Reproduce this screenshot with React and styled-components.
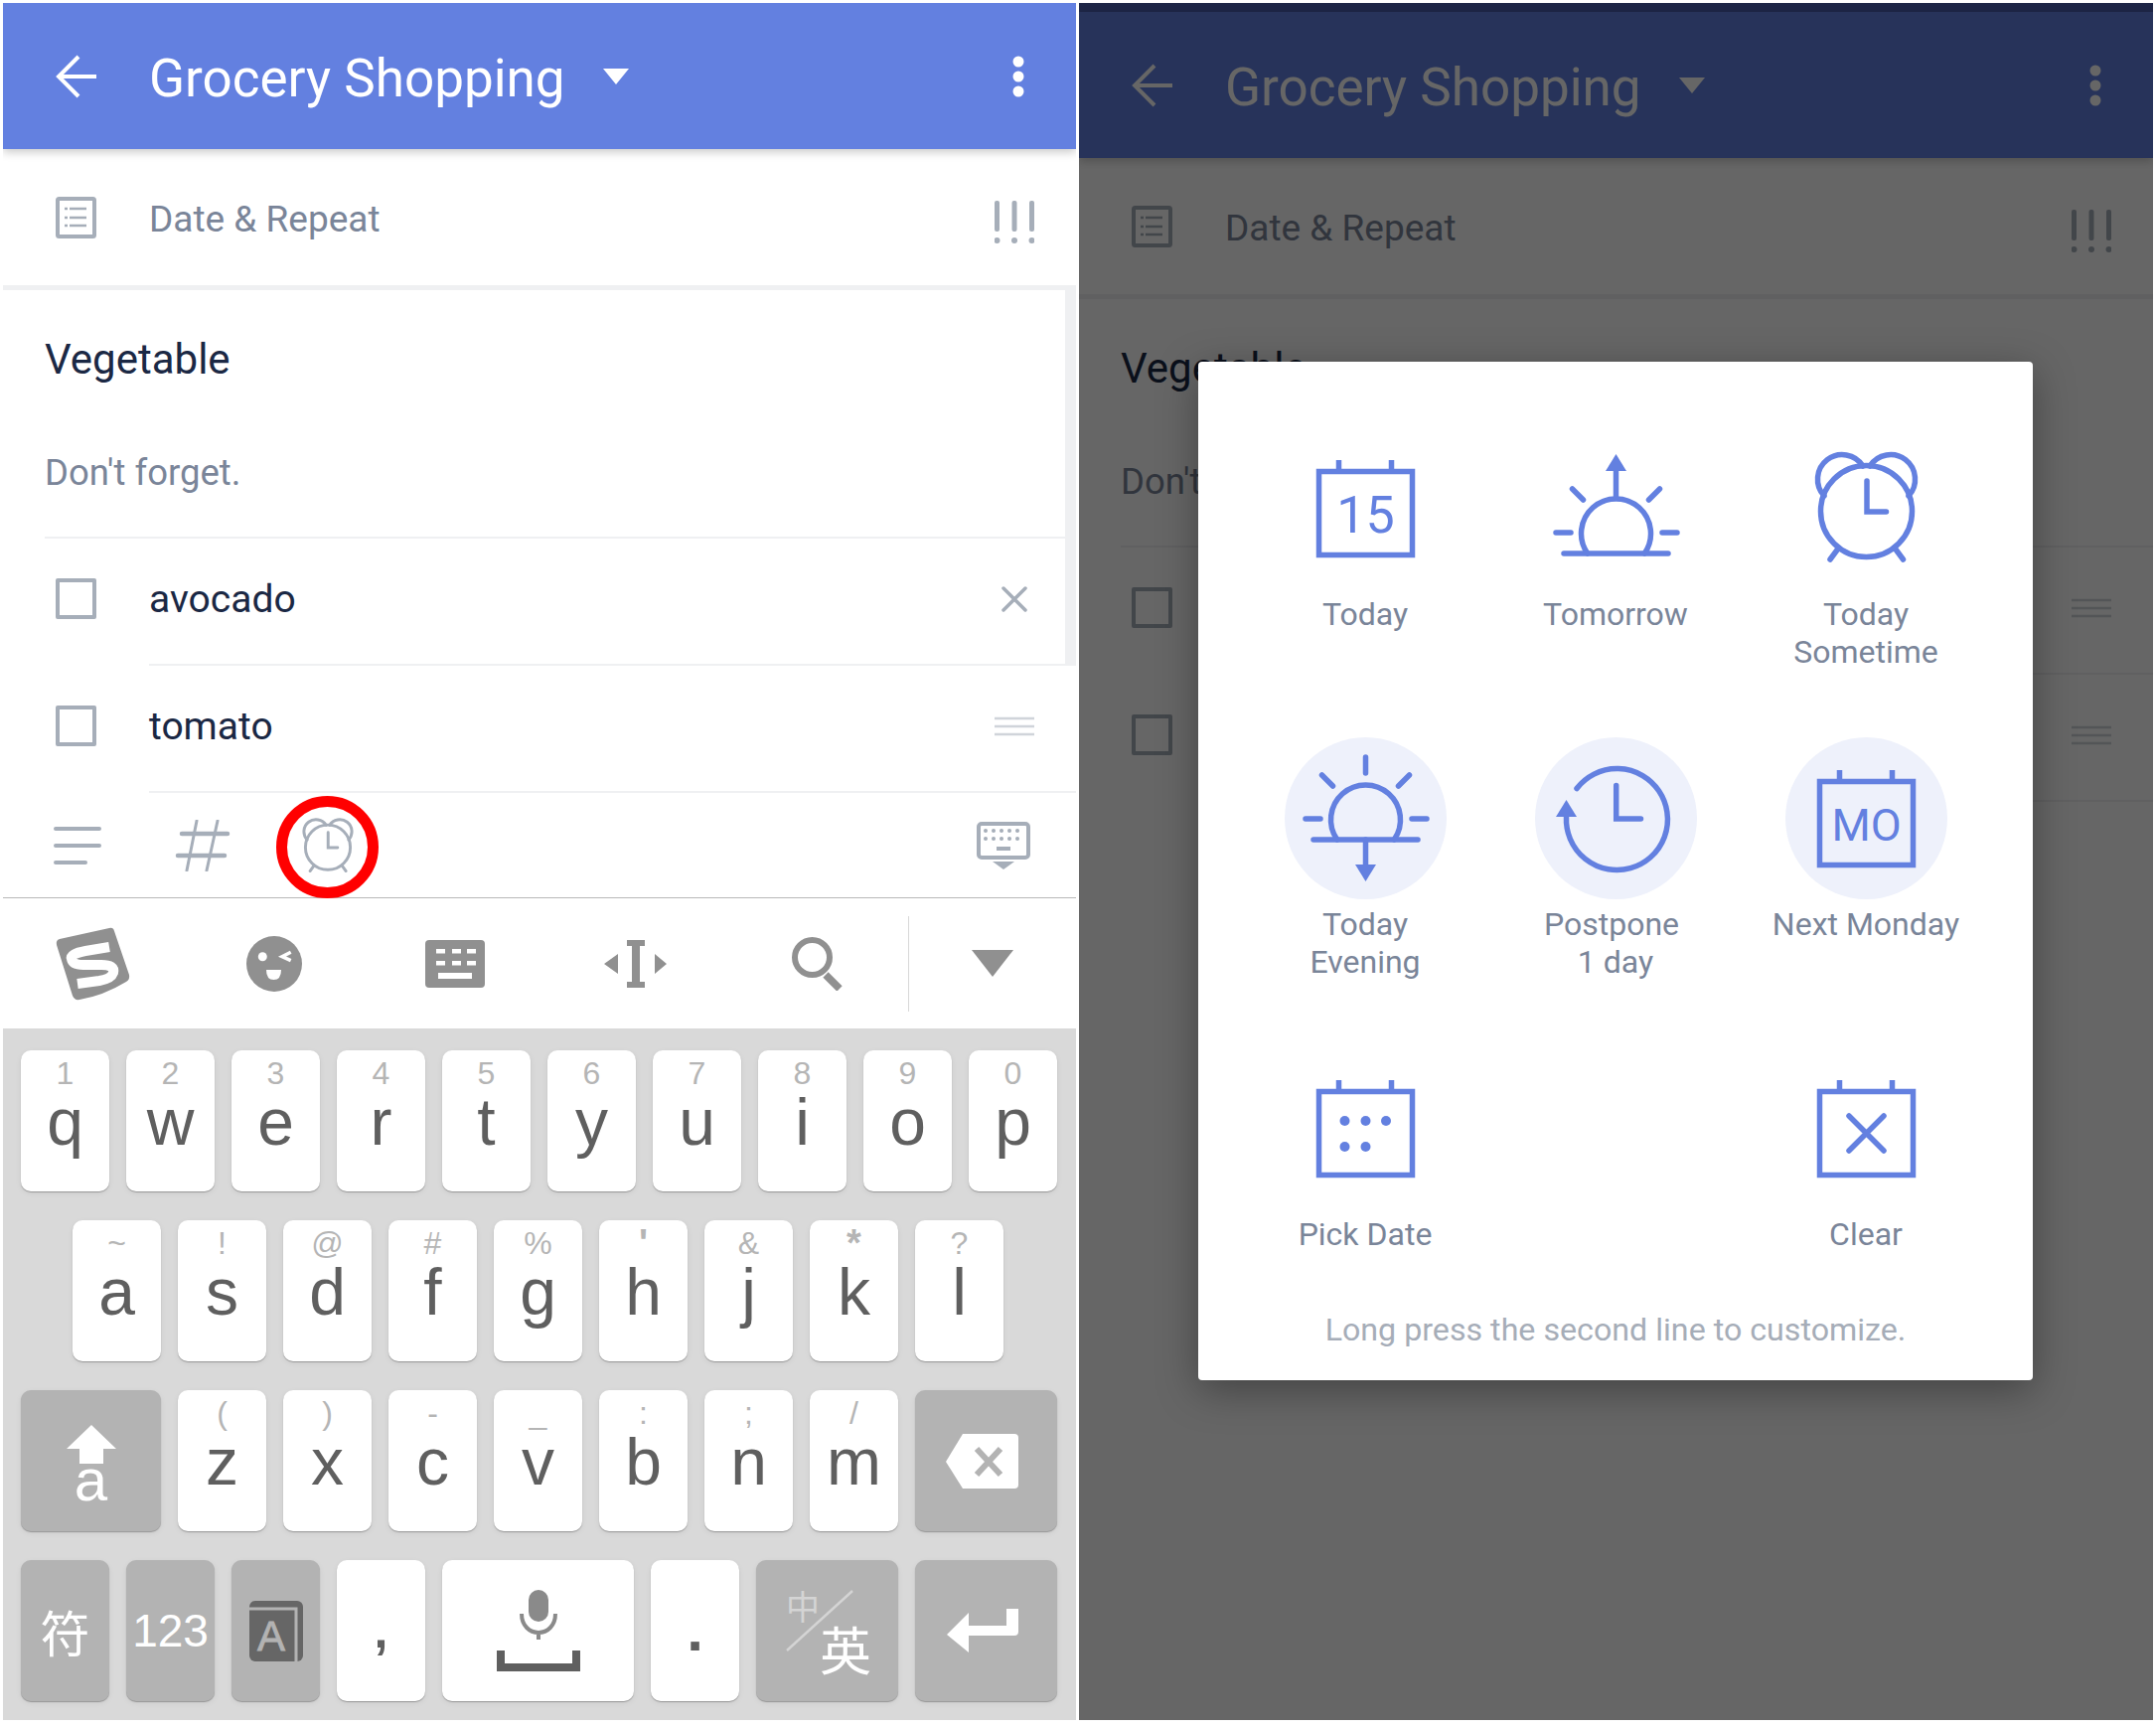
import React from "react";
import styled, { createGlobalStyle } from "styled-components";

const BLUE = "#6380e0";
const GREY = "#a6aeb9";
const KEYGREY = "#909090";

const Global = createGlobalStyle`
  html, body { margin: 0; padding: 0; background: #fff; }
  body { font-family: Roboto, "Noto Sans", sans-serif; }
`;

const Page = styled.div`
  display: grid;
  grid-template-columns: 1080px 1081px;
  column-gap: 3px;
  padding: 3px 3px 0;
  width: 2170px;
  height: 1740px;
  box-sizing: border-box;
`;

const Phone = styled.div`
  position: relative;
  height: 1728px;
  overflow: hidden;
  background: #fff;
  display: flex;
  flex-direction: column;
`;

const StatusStrip = styled.div`
  height: 9px;
  background: #4b5fb1;
  flex: none;
`;

const Header = styled.header`
  position: relative;
  z-index: 1;
  flex: none;
  height: 147px;
  background: ${BLUE};
  box-shadow: 0 3px 9px rgba(0, 0, 0, 0.22);
  display: flex;
  align-items: center;
  padding: 0 0 0 53px;
  color: #fff;
`;

const Title = styled.h1`
  margin: 0 0 0 52px;
  padding-top: 4px;
  font-size: 53px;
  font-weight: 400;
  line-height: 60px;
`;

const Dropdown = styled.svg`
  margin-left: 38px;
  flex: none;
`;

const MoreDots = styled.svg`
  margin-left: auto;
  margin-right: 52px;
  flex: none;
`;

const DateRow = styled.div`
  flex: none;
  height: 137px;
  border-bottom: 5px solid #eff0f2;
  display: flex;
  align-items: center;
  padding: 0 42px 0 53px;
  color: #7a8599;
`;

const DateText = styled.span`
  margin-left: 53px;
  padding-top: 3px;
  font-size: 37px;
  flex: 1;
`;

const Card = styled.section`
  flex: none;
  padding-left: 42px;
  border-right: ${(p) => (p.$focused ? "11px solid #eff0f2" : "0")};
`;

const CardTitle = styled.div`
  padding-top: 40px;
  font-size: 42px;
  line-height: 60px;
  color: #1b2844;
`;

const CardNote = styled.div`
  margin-top: 59px;
  padding-bottom: 39px;
  font-size: 36.5px;
  line-height: 50px;
  color: #7a8599;
  border-bottom: 2px solid #eff0f2;
`;

const ItemRow = styled.div`
  display: flex;
  align-items: center;
  height: ${(p) => p.$height}px;
  padding-left: 53px;
  margin-left: ${(p) => p.$inset}px;
`;

const ItemText = styled.div`
  flex: 1;
  align-self: stretch;
  display: flex;
  align-items: center;
  margin-left: 53px;
  padding-right: ${(p) => p.$right}px;
  padding-bottom: 4px;
  font-size: 39px;
  color: #1b2844;
  border-bottom: 2px solid #eff0f2;
`;

const ItemName = styled.span`
  flex: 1;
`;

const Checkbox = styled.span`
  flex: none;
  width: 41px;
  height: 41px;
  margin-bottom: 8px;
  box-sizing: border-box;
  border: 4px solid ${GREY};
  border-radius: 2px;
`;

const ToolBar = styled.div`
  position: relative;
  flex: none;
  height: 105px;
  display: flex;
  align-items: center;
  padding: 0 46px 0 51px;
  border-bottom: 1px solid #b9b9b9;
`;

const ToolGap = styled.span`
  flex: 1;
`;

const RedRing = styled.span`
  position: absolute;
  left: 275px;
  top: 3px;
  width: 103px;
  height: 103px;
  box-sizing: border-box;
  border: 11px solid #ff0000;
  border-radius: 50%;
`;

const KeyToolBar = styled.div`
  flex: none;
  height: 131px;
  display: flex;
  align-items: center;
  padding-left: 53px;
`;

const ToolDivider = styled.span`
  width: 1px;
  height: 96px;
  margin-left: 63px;
  background: #d8d8d8;
`;

const Keyboard = styled.div`
  flex: 1;
  background: #d9d9d9;
  padding: 22px 19px 0 18px;
  display: flex;
  flex-direction: column;
  gap: 29px;
`;

const KeyRow = styled.div`
  display: flex;
  gap: 17px;
  padding-left: ${(p) => p.$indent || 0}px;
`;

const Key = styled.div`
  flex: none;
  width: ${(p) => p.$w || 89}px;
  height: 142px;
  box-sizing: border-box;
  border-radius: 10px;
  background: ${(p) => (p.$dark ? "#b3b3b3" : "#fff")};
  box-shadow: 0 1px 1px rgba(0, 0, 0, 0.28), 0 2px 6px rgba(0, 0, 0, 0.06);
  font-family: "Liberation Sans", Arial, sans-serif;
  color: #5f5f5f;
  display: flex;
  flex-direction: column;
  align-items: center;
  justify-content: ${(p) => (p.$center ? "center" : "flex-start")};
`;

const Legend = styled.span`
  margin-top: 7px;
  height: 32px;
  font-size: ${(p) => (p.$bold ? 38 : 32)}px;
  font-weight: ${(p) => (p.$bold ? 700 : 400)};
  line-height: 32px;
  color: #b5b5b5;
`;

const Letter = styled.span`
  font-size: 66px;
  line-height: 66px;
`;

const ShiftLetter = styled.span`
  margin-top: -8px;
  font-size: 60px;
  line-height: 50px;
  color: #fff;
`;

const WhiteLabel = styled.span`
  font-family: ${(p) => (p.$cjk ? '"Noto Sans CJK SC", sans-serif' : "inherit")};
  font-size: ${(p) => p.$size}px;
  color: #fff;
  font-weight: 400;
`;

const Punct = styled.span`
  font-size: ${(p) => p.$size}px;
  line-height: ${(p) => p.$size}px;
  font-weight: 700;
`;

const Overlay = styled.div`
  position: absolute;
  inset: 0;
  z-index: 2;
  background: rgba(0, 0, 0, 0.6);
  display: flex;
  align-items: flex-start;
  padding: 361px 0 0 120px;
`;

const Dialog = styled.div`
  width: 840px;
  height: 1025px;
  box-sizing: border-box;
  padding: 66px 42px 0;
  background: #fff;
  border-radius: 4px;
  box-shadow: 0 10px 40px rgba(0, 0, 0, 0.35);
`;

const Choices = styled.div`
  display: grid;
  grid-template-columns: repeat(3, 252px);
  grid-template-rows: 312px 312px 207px;
`;

const Choice = styled.div`
  display: flex;
  flex-direction: column;
  align-items: center;
`;

const ChoiceIcon = styled.svg`
  display: block;
  width: 163px;
  height: 163px;
  border-radius: 50%;
  background: ${(p) => (p.$tint ? "#eef1fb" : "transparent")};
  fill: none;
  stroke: ${BLUE};
  stroke-width: 5.5;
  stroke-linecap: round;
`;

const ChoiceLabel = styled.div`
  margin-top: 6px;
  font-size: 32px;
  line-height: 38px;
  color: #7a8599;
  text-align: center;
  white-space: pre;
`;

const Hint = styled.div`
  padding-top: 58px;
  font-size: 32.2px;
  line-height: 38px;
  color: #a6adb8;
  text-align: center;
`;

const IconText = styled.text`
  font-family: Roboto, sans-serif;
  fill: ${BLUE};
  stroke: none;
  text-anchor: middle;
`;

const SmallAlarmIcon = styled.svg`
  position: absolute;
  left: 299px;
  top: 25px;
  width: 56px;
  height: 56px;
  fill: none;
  stroke: ${GREY};
  stroke-width: 6;
  stroke-linecap: round;
`;

const ArrowLeft = () => (
  <svg width="42" height="44" viewBox="0 0 42 44" fill="none" stroke="#fff" strokeWidth="4">
    <path d="M23 2 3 22l20 20M3 22h38" />
  </svg>
);

const NoteIcon = () => (
  <svg width="41" height="42" viewBox="0 0 41 42" fill="none" stroke={GREY}>
    <rect x="2" y="2" width="37" height="38" rx="1.5" strokeWidth="4" />
    <path d="M14 12h17M14 21h17M14 29h17" strokeWidth="2.5" />
    <path d="M9 12h3M9 21h3M9 29h3" strokeWidth="2.5" />
  </svg>
);

const BangIcon = () => (
  <svg width="40" height="44" viewBox="0 0 40 44" fill={GREY} style={{ marginTop: 10 }}>
    <rect x="0" y="0" width="5" height="31" rx="2" />
    <rect x="17.5" y="0" width="5" height="31" rx="2" />
    <rect x="35" y="0" width="5" height="31" rx="2" />
    <circle cx="2.5" cy="40" r="3" />
    <circle cx="20" cy="40" r="3" />
    <circle cx="37.5" cy="40" r="3" />
  </svg>
);

const CloseIcon = () => (
  <svg width="26" height="26" viewBox="0 0 26 26" stroke={GREY} strokeWidth="3.5" strokeLinecap="round" style={{ flex: "none" }}>
    <path d="M2 2l22 22M24 2 2 24" />
  </svg>
);

const HandleIcon = () => (
  <svg width="40" height="20" viewBox="0 0 40 20" stroke="#d0d4da" strokeWidth="2.5" style={{ flex: "none" }}>
    <path d="M0 2h40M0 10h40M0 18h40" />
  </svg>
);

const LinesIcon = () => (
  <svg width="48" height="40" viewBox="0 0 48 40" stroke={GREY} strokeWidth="4" strokeLinecap="round">
    <path d="M2 3h44M2 20h44M2 37h30" />
  </svg>
);

const HashIcon = () => (
  <svg width="58" height="52" viewBox="0 0 58 52" stroke={GREY} strokeLinecap="round" style={{ marginLeft: 73 }}>
    <path d="M8 14h46M4 36h47" strokeWidth="4.5" />
    <path d="M23 1 13 51M44 1 33 51" strokeWidth="3" />
  </svg>
);

const AlarmShapes = () => (
  <>
    <circle cx="81.5" cy="84.5" r="46" />
    <path d="M39 69A24.7 24.7 0 1 1 78 39M124 69A24.7 24.7 0 1 0 85 39" />
    <path d="M82 54v31h19.5M53.5 121.5 45 133M110 121.5 118.5 133" />
  </>
);

const SoftKeyIcon = () => (
  <svg width="54" height="48" viewBox="0 0 54 48" style={{ flex: "none" }}>
    <rect x="2" y="2" width="50" height="34" rx="3" fill="none" stroke={GREY} strokeWidth="4" />
    {[9, 17].map((y) =>
      [9, 17, 25, 33, 41].map((x) => <circle key={`${x}-${y}`} cx={x} cy={y} r="2" fill={GREY} />)
    )}
    <rect x="20" y="25" width="14" height="4" fill={GREY} />
    <path d="M16 40h22L27 48z" fill={GREY} />
  </svg>
);

const SogouIcon = () => (
  <svg width="76" height="74" viewBox="0 0 76 74">
    <path d="M4 12 54 1q4-1 5 3l15 44q1 5-3 7-23 14-47 18-5 1-7-4L1 18q-1-5 3-6z" fill={KEYGREY} />
    <path d="M54 20 30 24Q14 27 16 32q1 6 12 6h18q14 0 12 8-2 6-14 8l-22 3" fill="none" stroke="#fff" strokeWidth="10" />
  </svg>
);

const WinkIcon = () => (
  <svg width="56" height="56" viewBox="0 0 56 56" style={{ marginLeft: 116 }}>
    <circle cx="28" cy="28" r="28" fill={KEYGREY} />
    <circle cx="16.3" cy="20.7" r="4.5" fill="#fff" />
    <path d="M44.7 16.3 36 20.7l8.7 4" fill="none" stroke="#fff" strokeWidth="3.5" />
    <path d="M20 34h15q0 10-7.5 10T20 34z" fill="#fff" />
  </svg>
);

const KeysIcon = () => (
  <svg width="60" height="48" viewBox="0 0 60 48" style={{ marginLeft: 124 }}>
    <rect width="60" height="48" rx="4" fill={KEYGREY} />
    {[9, 21].map((y) =>
      [11, 27, 42].map((x) => <rect key={`${x}-${y}`} x={x} y={y} width="9" height="4.5" fill="#fff" />)
    )}
    <rect x="13" y="33" width="34" height="6" fill="#fff" />
  </svg>
);

const CursorIcon = () => (
  <svg width="63" height="48" viewBox="0 0 63 48" fill={KEYGREY} style={{ marginLeft: 120 }}>
    <path d="M14 14v20L0 24zM51 14v20l12-10z" />
    <path d="M23 0h18v6h-5v36h5v6H23v-6h5V6h-5z" />
  </svg>
);

const SearchIcon = () => (
  <svg width="54" height="54" viewBox="0 0 54 54" fill="none" stroke={KEYGREY} style={{ marginLeft: 126 }}>
    <circle cx="20.5" cy="20.5" r="17.5" strokeWidth="6" />
    <path d="M34 38l14 14" strokeWidth="7.5" />
  </svg>
);

const ShiftArrow = () => (
  <svg width="50" height="39" viewBox="0 0 50 39" fill="#fff" style={{ marginTop: 35, flex: "none" }}>
    <path d="M25 0l25 24H37v15H13V24H0z" />
  </svg>
);

const DeleteIcon = () => (
  <svg width="73" height="55" viewBox="0 0 73 55" style={{ marginRight: 8 }}>
    <path d="M17 0h52q4 0 4 4v47q0 4-4 4H17L0 28z" fill="#fff" />
    <path d="M31 15l24 26M55 15 31 41" stroke="#b3b3b3" strokeWidth="6" />
  </svg>
);

const BookIcon = () => (
  <svg width="54" height="61" viewBox="0 0 54 61" fontFamily="Liberation Sans, Arial, sans-serif">
    <rect width="54" height="61" rx="6" fill="#666" />
    <path d="M0 8h47v53" fill="none" stroke="#b3b3b3" strokeWidth="3" />
    <text x="22" y="50" fontSize="42" textAnchor="middle" fill="#b3b3b3" stroke="#b3b3b3" strokeWidth="0.8">A</text>
  </svg>
);

const MicIcon = () => (
  <svg width="84" height="82" viewBox="0 0 84 82" fill="none">
    <rect x="32" y="0" width="20" height="32" rx="10" fill="#8a8a8a" />
    <path d="M25 24c0 12 8 19 17 19s17-7 17-19M42 43v7" stroke="#8a8a8a" strokeWidth="4" />
    <path d="M4 61v17h76V61" stroke="#5f5f5f" strokeWidth="8" />
  </svg>
);

const SwitchIcon = () => (
  <svg width="143" height="142" viewBox="0 0 143 142" fontFamily="Noto Sans CJK SC, sans-serif">
    <text x="47" y="60" fontSize="34" textAnchor="middle" fill="#d4d4d4">中</text>
    <path d="M97 31 31 91" stroke="#d4d4d4" strokeWidth="2.5" />
    <text x="90" y="111" fontSize="52" textAnchor="middle" fill="#fff">英</text>
  </svg>
);

const EnterIcon = () => (
  <svg width="72" height="44" viewBox="0 0 72 44" fill="#fff" style={{ marginRight: 7 }}>
    <path d="M0 26 22 4v13h38V0h12v23q0 4-4 4H22v17z" />
  </svg>
);

const CalendarFrame = () => (
  <>
    <rect x="34.5" y="44.5" width="94" height="84" />
    <path d="M54.5 33v10M107.5 33v10" strokeLinecap="butt" />
  </>
);

const SunShapes = () => (
  <>
    <path d="M52.8 103A35 35 0 1 1 110.2 103" />
    <path d="M29 103h105" />
    <path d="M37.5 38l11 11M125.5 38l-11 11M21 82h15M128 82h15" />
  </>
);

const icons = {
  today: (
    <ChoiceIcon viewBox="0 0 163 163">
      <CalendarFrame />
      <IconText x="81.5" y="106" fontSize="52">15</IconText>
    </ChoiceIcon>
  ),
  tomorrow: (
    <ChoiceIcon viewBox="0 0 163 163">
      <g transform="translate(0 24)">
        <SunShapes />
      </g>
      <path d="M81.5 71V42" />
      <path d="M81.5 27 92 44H71z" fill={BLUE} stroke="none" />
    </ChoiceIcon>
  ),
  sometime: (
    <ChoiceIcon viewBox="0 0 163 163">
      <AlarmShapes />
    </ChoiceIcon>
  ),
  evening: (
    <ChoiceIcon viewBox="0 0 163 163" $tint>
      <SunShapes />
      <path d="M81.5 20v16M81.5 103v27" />
      <path d="M81.5 145 92 128H71z" fill={BLUE} stroke="none" />
    </ChoiceIcon>
  ),
  postpone: (
    <ChoiceIcon viewBox="0 0 163 163" $tint>
      <path d="M42 51.5A51 51 0 1 1 31.5 80" />
      <path d="M31.5 63 42 80H21z" fill={BLUE} stroke="none" />
      <path d="M81.7 48.5V82h24.8" />
    </ChoiceIcon>
  ),
  monday: (
    <ChoiceIcon viewBox="0 0 163 163" $tint>
      <CalendarFrame />
      <IconText x="81.5" y="104" fontSize="45">MO</IconText>
    </ChoiceIcon>
  ),
  pick: (
    <ChoiceIcon viewBox="0 0 163 163">
      <CalendarFrame />
      {[[60.5, 74], [81.5, 74], [102, 74], [60.5, 100], [81.5, 100]].map(([cx, cy]) => (
        <circle key={`${cx}-${cy}`} cx={cx} cy={cy} r="5" fill={BLUE} stroke="none" />
      ))}
    </ChoiceIcon>
  ),
  clear: (
    <ChoiceIcon viewBox="0 0 163 163">
      <CalendarFrame />
      <path d="M64 69l35 35M99 69l-35 35" />
    </ChoiceIcon>
  ),
};

const choices = [
  { icon: "today", label: "Today" },
  { icon: "tomorrow", label: "Tomorrow" },
  { icon: "sometime", label: "Today\nSometime" },
  { icon: "evening", label: "Today\nEvening" },
  { icon: "postpone", label: "Postpone \n1 day" },
  { icon: "monday", label: "Next Monday" },
  { icon: "pick", label: "Pick Date" },
  null,
  { icon: "clear", label: "Clear" },
];

const row1 = [["1", "q"], ["2", "w"], ["3", "e"], ["4", "r"], ["5", "t"], ["6", "y"], ["7", "u"], ["8", "i"], ["9", "o"], ["0", "p"]];
const row2 = [["~", "a"], ["!", "s"], ["@", "d"], ["#", "f"], ["%", "g"], ["'", "h"], ["&", "j"], ["*", "k"], ["?", "l"]];
const row3 = [["(", "z"], [")", "x"], ["-", "c"], ["_", "v"], [":", "b"], [";", "n"], ["/", "m"]];

const LetterKeys = ({ keys }) =>
  keys.map(([top, letter]) => (
    <Key key={letter}>
      <Legend $bold={top === "*" || top === "'"}>{top}</Legend>
      <Letter>{letter}</Letter>
    </Key>
  ));

const Screen = ({ focused, dimmed }) => (
  <>
    {dimmed && <StatusStrip />}
    <Header>
      <ArrowLeft />
      <Title>Grocery Shopping</Title>
      <Dropdown width="26" height="16" viewBox="0 0 26 16" fill="#fff">
        <path d="M0 0h26L13 16z" />
      </Dropdown>
      <MoreDots width="12" height="42" viewBox="0 0 12 42" fill="#fff">
        <circle cx="6" cy="6" r="5.5" />
        <circle cx="6" cy="21" r="5.5" />
        <circle cx="6" cy="36" r="5.5" />
      </MoreDots>
    </Header>
    <DateRow>
      <NoteIcon />
      <DateText>Date &amp; Repeat</DateText>
      <BangIcon />
    </DateRow>
    <Card $focused={focused}>
      <CardTitle>Vegetable</CardTitle>
      <CardNote>Don't forget.</CardNote>
      <ItemRow $height={128} $inset={-42}>
        <Checkbox />
        <ItemText $right={focused ? 38 : 42}>
          <ItemName>avocado</ItemName>
          {focused ? <CloseIcon /> : <HandleIcon />}
        </ItemText>
      </ItemRow>
    </Card>
    <ItemRow $height={128} $inset={0}>
      <Checkbox />
      <ItemText $right={42}>
        <ItemName>tomato</ItemName>
        <HandleIcon />
      </ItemText>
    </ItemRow>
  </>
);

const App = () => (
  <>
    <Global />
    <Page>
      <Phone>
        <Screen focused />
        <ToolBar>
          <LinesIcon />
          <HashIcon />
          <SmallAlarmIcon viewBox="26 24 111 114">
            <AlarmShapes />
          </SmallAlarmIcon>
          <RedRing />
          <ToolGap />
          <SoftKeyIcon />
        </ToolBar>
        <KeyToolBar>
          <SogouIcon />
          <WinkIcon />
          <KeysIcon />
          <CursorIcon />
          <SearchIcon />
          <ToolDivider />
          <svg width="42" height="27" viewBox="0 0 42 27" fill={KEYGREY} style={{ marginLeft: 63 }}>
            <path d="M0 0h42L21 27z" />
          </svg>
        </KeyToolBar>
        <Keyboard>
          <KeyRow>
            <LetterKeys keys={row1} />
          </KeyRow>
          <KeyRow $indent={52}>
            <LetterKeys keys={row2} />
          </KeyRow>
          <KeyRow>
            <Key $w={141} $dark>
              <ShiftArrow />
              <ShiftLetter>a</ShiftLetter>
            </Key>
            <LetterKeys keys={row3} />
            <Key $w={143} $dark $center>
              <DeleteIcon />
            </Key>
          </KeyRow>
          <KeyRow>
            <Key $dark $center>
              <WhiteLabel $size={50} $cjk>符</WhiteLabel>
            </Key>
            <Key $dark $center>
              <WhiteLabel $size={46}>123</WhiteLabel>
            </Key>
            <Key $dark $center>
              <BookIcon />
            </Key>
            <Key $center>
              <Punct $size={50}>,</Punct>
            </Key>
            <Key $w={193} $center>
              <MicIcon />
            </Key>
            <Key $center>
              <Punct $size={60}>.</Punct>
            </Key>
            <Key $w={143} $dark $center>
              <SwitchIcon />
            </Key>
            <Key $w={143} $dark $center>
              <EnterIcon />
            </Key>
          </KeyRow>
        </Keyboard>
      </Phone>
      <Phone>
        <Screen dimmed />
        <Overlay>
          <Dialog>
            <Choices>
              {choices.map((c, i) =>
                c ? (
                  <Choice key={c.icon}>
                    {icons[c.icon]}
                    <ChoiceLabel>{c.label}</ChoiceLabel>
                  </Choice>
                ) : (
                  <span key={i} />
                )
              )}
            </Choices>
            <Hint>Long press the second line to customize.</Hint>
          </Dialog>
        </Overlay>
      </Phone>
    </Page>
  </>
);

export default App;
